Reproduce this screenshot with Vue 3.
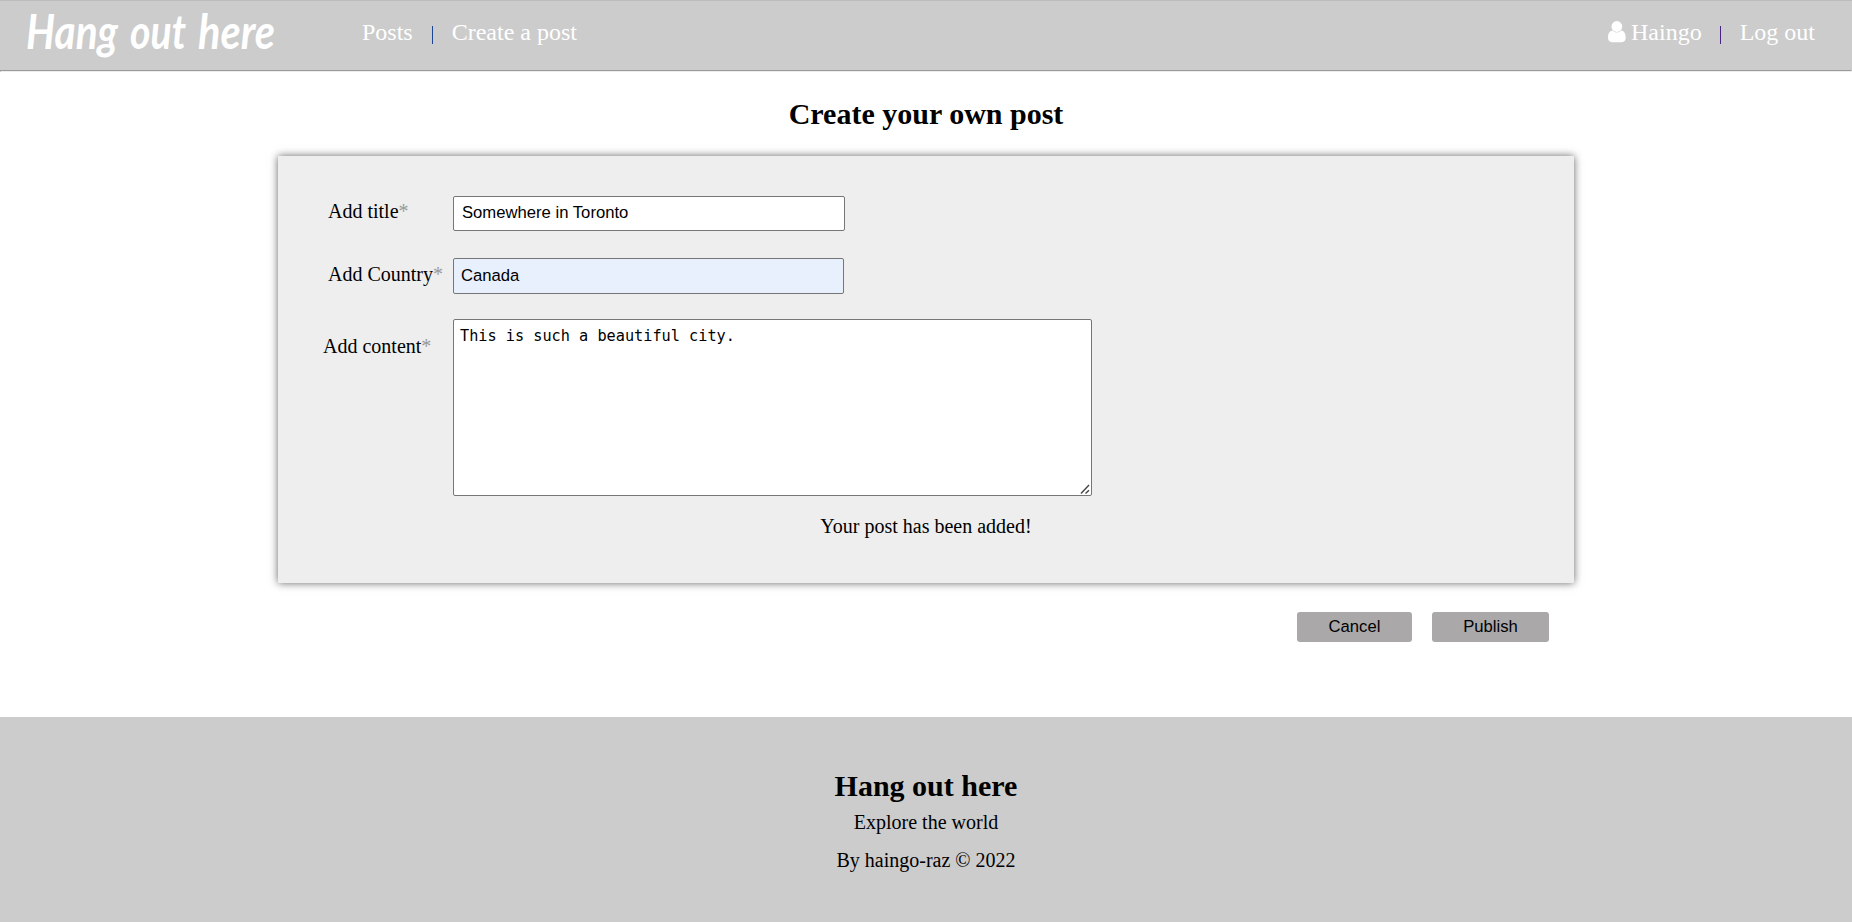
<script setup>
import { ref } from 'vue'

const title = ref('Somewhere in Toronto')
const country = ref('Canada')
const content = ref('This is such a beautiful city.')
</script>

<template>
  <div class="page">
    <header class="bar">
      <svg class="logo" width="254" height="62" viewBox="0 0 254 62" role="img" aria-label="Hang out here">
        <text class="logo-text" y="45">
          <tspan x="1" textLength="92" lengthAdjust="spacingAndGlyphs">Hang</tspan>
          <tspan x="105" textLength="56" lengthAdjust="spacingAndGlyphs">out</tspan>
          <tspan x="173" textLength="77" lengthAdjust="spacingAndGlyphs">here</tspan>
        </text>
      </svg>
      <nav class="links">
        <a>Posts</a>
        <i class="sep"></i>
        <a>Create a post</a>
      </nav>
      <nav class="links account">
        <a class="user">
          <svg width="18" height="22" viewBox="0 0 18 22">
            <path d="M4.6 9.6C1.6 10 0 12.600 0 16.500C0 19.400 1.500 21.200 4 21.200H13.700C16.200 21.200 17.700 19.400 17.700 16.500C17.700 12.600 16.100 10 13.100 9.600C11.900 10.900 10.500 11.400 8.850 11.400C7.200 11.400 5.800 10.900 4.600 9.600Z" />
            <circle cx="8.850" cy="5.500" r="5.400" />
          </svg>
          <span>Haingo</span>
        </a>
        <i class="sep visited"></i>
        <a>Log out</a>
      </nav>
    </header>
    <hr class="rule" />

    <main>
      <h2 class="heading">Create your own post</h2>
      <form class="card" @submit.prevent>
        <div class="row title-row">
          <label for="title">Add title<span class="star">*</span></label>
          <input id="title" v-model="title" type="text" spellcheck="false" />
        </div>
        <div class="row country-row">
          <label for="country">Add Country<span class="star">*</span></label>
          <input id="country" v-model="country" class="filled" type="text" spellcheck="false" />
        </div>
        <div class="row content-row">
          <label for="content">Add content<span class="star">*</span></label>
          <div class="area">
            <textarea id="content" v-model="content" spellcheck="false"></textarea>
            <svg class="grip" width="10" height="10" viewBox="0 0 10 10">
              <path d="M1 9.500L9 1M5.500 9.500L9 6.200" />
            </svg>
          </div>
        </div>
        <p class="message">Your post has been added!</p>
      </form>
      <div class="actions">
        <button class="cancel" type="button">Cancel</button>
        <button class="publish" type="button">Publish</button>
      </div>
    </main>

    <footer class="footer">
      <h2>Hang out here</h2>
      <p>Explore the world</p>
      <p class="credit">By haingo-raz © 2022</p>
    </footer>
  </div>
</template>

<style>
body {
  margin: 0;
  background: #fff;
}
</style>

<style scoped>
.page {
  display: flex;
  flex-direction: column;
  height: 922px;
  overflow: hidden;
  box-sizing: border-box;
  font: 20px/23px "Liberation Serif", "Times New Roman", serif;
  color: #000;
}
.page * {
  box-sizing: border-box;
}
.bar {
  display: flex;
  align-items: flex-start;
  height: 70px;
  flex: none;
  padding: 0 37px 0 25px;
  background: #ccc;
  border-top: 1px solid #bcbcbc;
}
.logo {
  display: block;
  margin-top: 3px;
  overflow: visible;
}
.logo-text {
  font: italic 700 47px Lato, "Liberation Sans", sans-serif;
  fill: #fff;
}
.links {
  display: flex;
  align-items: flex-start;
  margin: 17px 0 0 83px;
  font-size: 24px;
  line-height: 28px;
  color: #fff;
}
.account {
  margin-left: auto;
}
.sep {
  width: 1px;
  height: 18px;
  margin: 8px 19px 0;
  background: #1c4494;
}
.sep.visited {
  margin-left: 18px;
  background: #4b2380;
}
.user {
  display: flex;
}
.user svg {
  margin: 3px 5px 0 0;
  fill: #fff;
}
.rule {
  width: 100%;
  height: 2px;
  flex: none;
  margin: 0;
  border: 1px solid;
  border-color: #9a9a9a #eee #eee #9a9a9a;
}
main {
  height: 645px;
  flex: none;
}
.heading {
  margin: 0;
  padding: 24px 0 25px;
  font-size: 30px;
  line-height: 35px;
  text-align: center;
}
.card {
  width: 1296px;
  height: 427px;
  margin: 0 auto;
  padding-top: 40px;
  background: #eee;
  box-shadow: 0 0 8px #666;
}
.row {
  display: grid;
  grid-template-columns: 175px auto;
  justify-content: start;
  align-items: start;
}
label {
  padding: 4px 0 0 50px;
  white-space: nowrap;
}
.star {
  color: #999;
}
input,
textarea {
  display: block;
  margin: 0;
  border: 1px solid #767676;
  border-radius: 2px;
  background: #fff;
  color: #000;
  outline: none;
}
input {
  width: 392px;
  height: 35px;
  padding: 0 8px 2px;
  font: 16.67px "Liberation Sans", Arial, sans-serif;
}
.country-row {
  margin-top: 27px;
}
input.filled {
  width: 391px;
  height: 36px;
  padding: 0 7px 1px;
  background: #e8f0fe;
}
.country-row label {
  padding-top: 5px;
}
.content-row {
  margin-top: 25px;
}
.content-row label {
  padding: 16px 0 0 45px;
}
.area {
  position: relative;
}
textarea {
  width: 639px;
  height: 177px;
  padding: 6px;
  font: 15.22px/20px "DejaVu Sans Mono", monospace;
  resize: none;
}
.grip {
  position: absolute;
  right: 2px;
  bottom: 2px;
  fill: none;
  stroke: #444;
  stroke-width: 1.4;
}
.message {
  margin: 19px 0 0;
  text-align: center;
}
.actions {
  display: flex;
  justify-content: flex-end;
  gap: 20px;
  padding: 29px 303px 0 0;
}
button {
  height: 30px;
  padding: 0 0 1px;
  border: 0;
  border-radius: 3px;
  background: #aaa8a9;
  color: #000;
  font: 16.67px "Liberation Sans", Arial, sans-serif;
}
.cancel {
  width: 115px;
}
.publish {
  width: 117px;
}
.footer {
  flex: 1;
  padding-top: 51px;
  background: #ccc;
  text-align: center;
}
.footer h2 {
  margin: 0;
  font-size: 30px;
  line-height: 35px;
}
.footer p {
  margin: 8px 0 0;
}
.footer .credit {
  margin-top: 15px;
}
</style>
